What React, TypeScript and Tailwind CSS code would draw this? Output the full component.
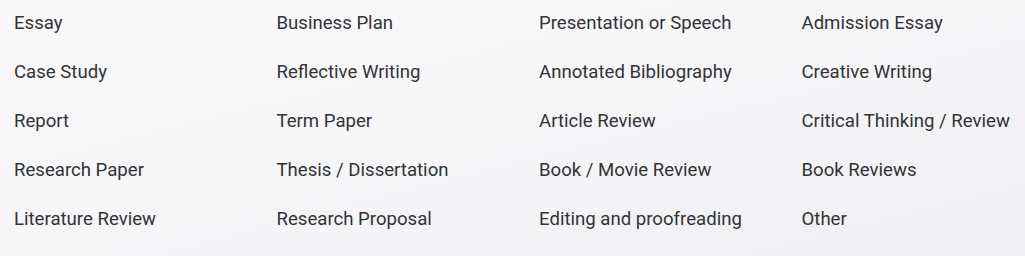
const items = [
  'Essay',
  'Business Plan',
  'Presentation or Speech',
  'Admission Essay',
  'Case Study',
  'Reflective Writing',
  'Annotated Bibliography',
  'Creative Writing',
  'Report',
  'Term Paper',
  'Article Review',
  'Critical Thinking / Review',
  'Research Paper',
  'Thesis / Dissertation',
  'Book / Movie Review',
  'Book Reviews',
  'Literature Review',
  'Research Proposal',
  'Editing and proofreading',
  'Other',
]

export default function App() {
  return (
    <div
      className="h-[256px] w-[1025px] overflow-hidden bg-gradient-to-br from-[#f9f9fb] via-[#f6f6f9] to-[#efeef2] pl-[14px] pt-[11px]"
      style={{ fontFamily: 'Roboto, "Noto Sans", sans-serif' }}
    >
      <ul className="grid grid-cols-[repeat(4,262.5px)] gap-y-[25px]">
        {items.map((item) => (
          <li key={item} className="text-[18.6px] leading-[24px] text-[#333336] whitespace-nowrap">
            {item}
          </li>
        ))}
      </ul>
    </div>
  )
}
